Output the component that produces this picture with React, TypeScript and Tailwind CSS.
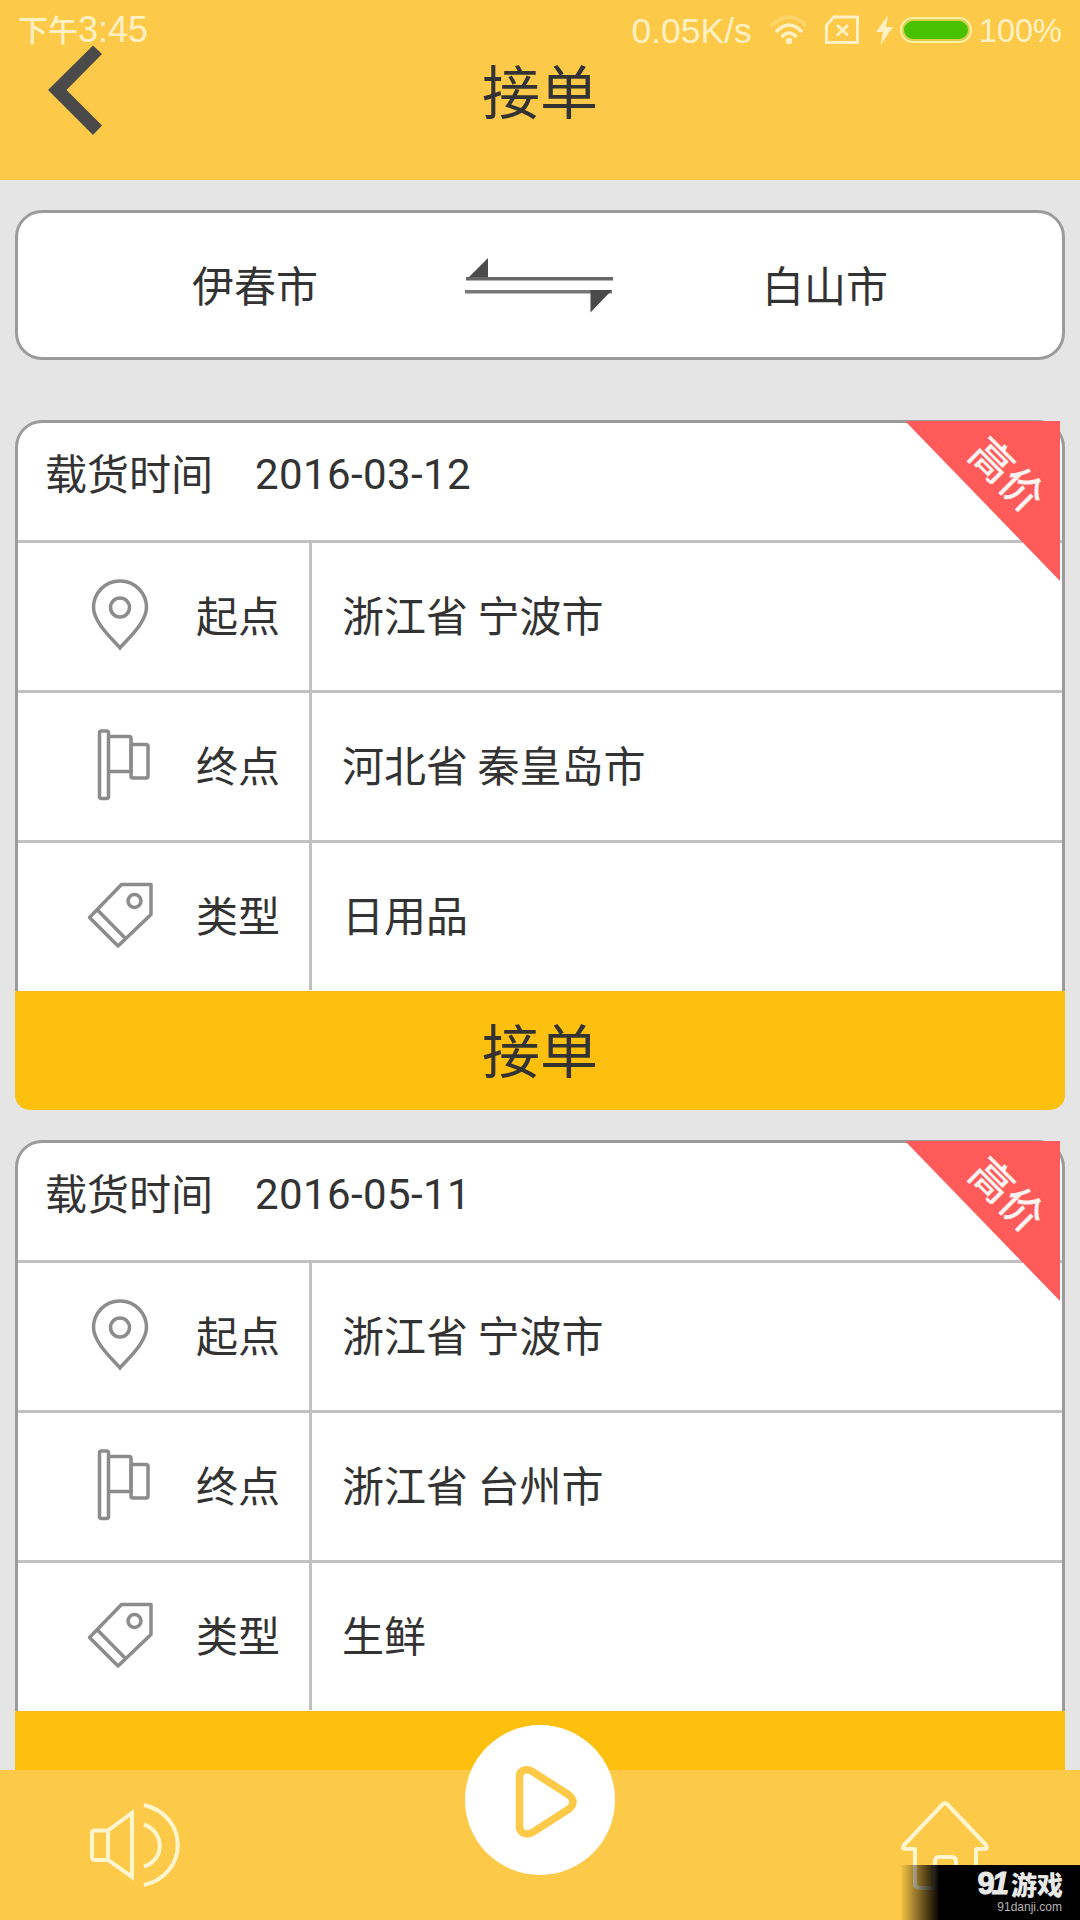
type Order = {
  date: string
  from: string
  to: string
  kind: string
}

const orders: Order[] = [
  { date: '2016-03-12', from: '浙江省 宁波市', to: '河北省 秦皇岛市', kind: '日用品' },
  { date: '2016-05-11', from: '浙江省 宁波市', to: '浙江省 台州市', kind: '生鲜' },
]

function PinIcon() {
  return (
    <svg width="90" height="90" viewBox="0 0 90 90" fill="none" stroke="#8c8c8c" strokeWidth="3.5">
      <path d="M45 73C38 64.500 18.5 47.500 18.5 32.500a26.5 26.5 0 0 1 53 0C71.5 47.500 52 64.500 45 73Z" />
      <circle cx="45" cy="32.500" r="9.5" />
    </svg>
  )
}

function FlagIcon() {
  return (
    <svg width="90" height="90" viewBox="0 0 90 90" fill="none" stroke="#8c8c8c" strokeWidth="3.5">
      <rect x="24.5" y="6" width="9" height="67.500" rx="2" />
      <path d="M34 11.5H54q2 0 2 2V46.500H34" />
      <path d="M56 19.500H71q2 0 2 2V51q0 2-2 2H58q-2 0-2-2V19" />
    </svg>
  )
}

function TagIcon() {
  return (
    <svg width="90" height="90" viewBox="0 0 90 90" fill="none" stroke="#8c8c8c" strokeWidth="3.5" strokeLinejoin="round">
      <path d="M46.500 9.500H76V39.500L43 71L14.500 42.500Z" />
      <path d="M22.500 35L50 63" />
      <circle cx="59.500" cy="26" r="6.500" />
    </svg>
  )
}

function StatusBar() {
  return (
    <div className="flex h-[60px] items-center text-[#fff1c4]">
      <div className="ml-[18px] flex items-center leading-[40px]">
        <span className="pb-[5px] text-[30px] font-medium">下午</span>
        <span className="font-['Liberation_Sans'] text-[36px]">3:45</span>
      </div>
      <div className="mr-[18px] ml-auto flex items-center">
        <span className="pt-[2px] font-['Liberation_Sans'] text-[35.5px] leading-[40px]">0.05K/s</span>
        <svg className="ml-[18px]" width="38" height="30" viewBox="0 0 38 30" fill="none" stroke="currentColor" strokeWidth="3.5">
          <path d="M1.500 11Q19-7 36.500 11" opacity="0.3" />
          <path d="M6 17Q19 3 32 17" />
          <path d="M11.500 22Q19 14 26.500 22" />
          <circle cx="19" cy="26" r="3.200" fill="currentColor" stroke="none" />
        </svg>
        <svg className="ml-[17px]" width="34" height="30" viewBox="0 0 34 30" fill="none" stroke="currentColor" strokeWidth="3">
          <path d="M9 2H32.500V27.500H1.500V10Z" />
          <path d="M12 10L23 20.500M23 10L12 20.500" />
        </svg>
        <svg className="ml-[17px]" width="17" height="30" viewBox="0 0 17 30" fill="currentColor">
          <path d="M12 0L0 17H7L4.500 30L17 12H10Z" />
        </svg>
        <div className="ml-[7px] h-[26px] w-[72px] rounded-full border-2 border-[#fff1a4] bg-[#d9cf4a] p-[2px]">
          <div className="h-full rounded-full bg-[#49c103]" />
        </div>
        <span className="ml-[7px] pt-[2px] font-['Liberation_Sans'] text-[32.500px] leading-[40px]">100%</span>
      </div>
    </div>
  )
}

function Header() {
  return (
    <header className="relative h-[180px] bg-[#fdc948]">
      <StatusBar />
      <svg className="absolute top-[45px] left-[48px]" width="54" height="90" viewBox="0 0 54 90" fill="#4a4a4a">
        <path d="M45 0.500L54 9L18.500 45L54 80.500L45 90L0 45Z" />
      </svg>
      <h1 className="absolute top-[53px] w-full text-center text-[58px] leading-[72px]">接单</h1>
    </header>
  )
}

function RouteBar() {
  return (
    <section className="mx-[15px] mt-[30px] flex h-[150px] items-center rounded-[27px] border-3 border-[#9b9b9b] bg-white text-[42px]">
      <span className="w-[474px] pb-[3px] text-center leading-[60px]">伊春市</span>
      <svg className="mx-[-27px] w-[150px] shrink-0" height="62" viewBox="0 0 150 62" fill="#4a4a4a">
        <path d="M1 26L23 4V26Z" />
        <path d="M1 23H148V26.500H1Z" fill="#666" />
        <path d="M0 36H147V39.500H0Z" fill="#777" />
        <path d="M125.500 36H147L125.500 58.500Z" />
      </svg>
      <span className="w-[474px] pb-[3px] text-center leading-[60px]">白山市</span>
    </section>
  )
}

function Row({ icon, label, value }: { icon: React.ReactNode; label: string; value: string }) {
  return (
    <div className="flex h-[150px] border-t-3 border-[#c1c1c1]">
      <div className="flex w-[294px] items-center border-r-3 border-[#c1c1c1] pt-[6px] pl-[57px]">
        {icon}
        <span className="ml-[31px] pb-[12px] leading-[60px]">{label}</span>
      </div>
      <span className="self-center pb-[6px] pl-[30px] leading-[60px]">{value}</span>
    </div>
  )
}

function OrderCard({ order }: { order: Order }) {
  return (
    <article className="relative mx-[15px] mb-[30px] h-[690px] text-[42px]">
      <div className="h-[571px] rounded-t-[27px] border-x-3 border-t-3 border-[#9b9b9b] bg-white">
        <div className="flex h-[117px] items-center pb-[13px] pl-[27px]">
          <span className="pb-[6px] leading-[60px]">载货时间</span>
          <span className="ml-[42px] font-[Roboto] leading-[60px] tracking-[0.4px]">{order.date}</span>
        </div>
        <Row icon={<PinIcon />} label="起点" value={order.from} />
        <Row icon={<FlagIcon />} label="终点" value={order.to} />
        <Row icon={<TagIcon />} label="类型" value={order.kind} />
      </div>
      <button className="block h-[119px] w-full rounded-b-[15px] bg-[#fec00f] pb-[5px] text-[58px] leading-[114px]">接单</button>
      {/* corner ribbon */}
      <div className="absolute top-[1px] right-[5px] h-[160px] w-[155px] bg-[#ff5b5b] [clip-path:polygon(0_0,100%_0,100%_100%)]">
        <span className="absolute top-[28px] left-[62px] rotate-45 text-[42px] leading-[48px] font-medium whitespace-nowrap text-[#fff3f0]">高价</span>
      </div>
    </article>
  )
}

function BottomNav() {
  return (
    <nav className="absolute bottom-0 left-0 h-[150px] w-full bg-[#fdc948]">
      <div className="flex justify-between px-[90px] pt-[30px] text-[#fff6cf]">
        <svg width="90" height="90" viewBox="0 0 90 90" fill="none" stroke="currentColor" strokeWidth="4">
          <path d="M18 30.500H5Q2 30.500 2 33.500V57Q2 60 5 60H18Z" />
          <path d="M18 30.500L42 13V77L18 60" />
          <path d="M54 24.500C75 32 75 60 54 66.500" />
          <path d="M54 5C99 16 99 74 54 85" />
        </svg>
        <svg width="90" height="95" viewBox="0 0 90 95" fill="none" stroke="currentColor" strokeWidth="4" strokeLinejoin="round">
          <path d="M43 4Q45 2 47 4L86 45Q88 49 85 49H76V83Q76 88 71 88H20Q15 88 15 83V49H5Q2 49 4 45Z" />
          <path d="M35 88V62Q35 57 39 57H52Q56 57 56 62V88" />
        </svg>
      </div>
      <div className="absolute -top-[45px] left-[465px] h-[150px] w-[150px] rounded-full bg-white">
        <svg width="150" height="150" viewBox="0 0 150 150" fill="none" stroke="#fdc948" strokeWidth="7.500">
          <path d="M54.500 52Q54.500 46 60 45Q64 44 68 47L104 70Q112 77 104 84L68 107Q63 110.500 58 108Q54.500 106 54.500 101Z" />
        </svg>
      </div>
    </nav>
  )
}

function Watermark() {
  return (
    <div className="absolute right-0 bottom-0 h-[55px] w-[180px] bg-linear-to-r from-transparent to-black to-[22%] text-right">
      <div className="flex h-[35px] items-center justify-end pt-[2px] pr-[17px] text-[#e8e8e8]">
        <span className="mr-[5px] font-['Liberation_Sans'] text-[31px] leading-none font-bold tracking-[-3px] [-webkit-text-stroke:1px_#e8e8e8]">
          9<i>1</i>
        </span>
        <span className="text-[26px] leading-none font-black">游戏</span>
      </div>
      <div className="pr-[18px] font-['Liberation_Sans'] text-[12px] leading-[14px] text-[#b5b5b5]">91danji.com</div>
    </div>
  )
}

export default function App() {
  return (
    <div className="relative h-[1920px] w-[1080px] overflow-hidden bg-[#e5e5e5] font-['Noto_Sans_CJK_SC',sans-serif] text-[#333]">
      <Header />
      <RouteBar />
      <main className="mt-[60px]">
        {orders.map((order) => (
          <OrderCard key={order.date} order={order} />
        ))}
      </main>
      <BottomNav />
      <Watermark />
    </div>
  )
}
